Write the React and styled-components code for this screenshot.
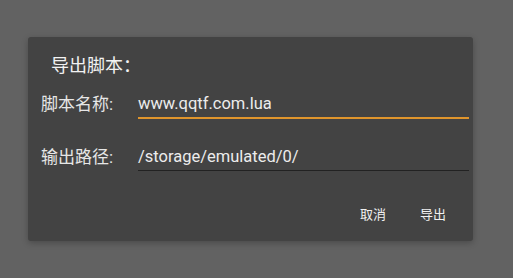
import React from "react";
import styled, { createGlobalStyle } from "styled-components";

const Global = createGlobalStyle`
  html, body { margin: 0; padding: 0; background: #626262; }
  body { font-family: "Roboto", "Noto Sans CJK SC", sans-serif; }
`;

const Screen = styled.div`
  width: 513px;
  height: 278px;
  padding: 37px 0 0 28px;
  box-sizing: border-box;
`;

const Dialog = styled.div`
  width: 445px;
  height: 204px;
  box-sizing: border-box;
  background: #434343;
  border-radius: 3px;
  box-shadow: 0 2px 6px rgba(0, 0, 0, 0.25);
  padding: 17px 4px 10px 13px;
  display: flex;
  flex-direction: column;
`;

const Title = styled.div`
  font-size: 18px;
  line-height: 24px;
  color: #f2f2f2;
  padding-left: 10px;
  height: 24px;
`;

const Row = styled.div`
  display: flex;
  align-items: flex-start;
  margin-top: ${(p) => p.$gap}px;
`;

const Label = styled.div`
  width: 97px;
  flex: none;
  font-size: 17px;
  line-height: 24px;
  color: #e6e6e6;
`;

const Field = styled.div`
  flex: 1;
  font-size: 16.5px;
  line-height: 24px;
  color: #ececec;
  padding-bottom: ${(p) => (p.$focused ? 1 : 1)}px;
  border-bottom: ${(p) => (p.$focused ? "2px solid #e0952c" : "1px solid #222222")};
`;

const Actions = styled.div`
  display: flex;
  justify-content: flex-end;
  margin-top: 24px;
  padding-right: 6px;
`;

const Button = styled.button`
  width: 60px;
  height: 36px;
  border: none;
  background: transparent;
  color: #f0f0f0;
  font-family: "Roboto", "Noto Sans CJK SC", sans-serif;
  font-size: 13px;
  padding: 0;
  cursor: pointer;
`;

export default function App() {
  return (
    <>
      <Global />
      <Screen>
        <Dialog>
          <Title>导出脚本：</Title>
          <Row $gap={14}>
            <Label>脚本名称:</Label>
            <Field $focused>www.qqtf.com.lua</Field>
          </Row>
          <Row $gap={26}>
            <Label>输出路径:</Label>
            <Field>/storage/emulated/0/</Field>
          </Row>
          <Actions>
            <Button>取消</Button>
            <Button>导出</Button>
          </Actions>
        </Dialog>
      </Screen>
    </>
  );
}
